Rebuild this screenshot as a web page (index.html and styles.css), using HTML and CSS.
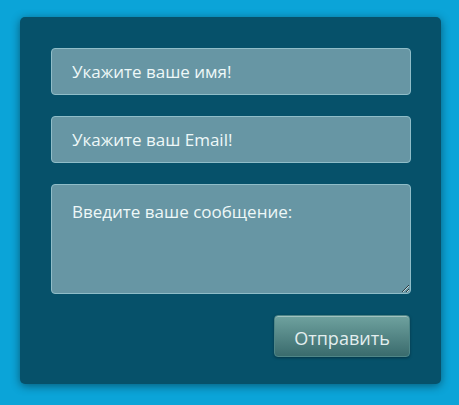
FILE: index.html
```html
<!DOCTYPE html>
<html>
<head>
<meta charset="utf-8">
<link rel="stylesheet" href="styles.css">
</head>
<body>
<div class="card">
  <form class="form">
    <input class="field" type="text" placeholder="Укажите ваше имя!">
    <input class="field" type="text" placeholder="Укажите ваш Email!">
    <textarea class="field area" placeholder="Введите ваше сообщение:"></textarea>
    <div class="actions"><button class="send" type="button">Отправить</button></div>
  </form>
</div>
</body>
</html>
```
FILE: styles.css
```css
html, body { margin: 0; padding: 0; }
body {
  width: 459px; height: 405px;
  background: #0ba4d8;
  font-family: "Open Sans", "Noto Sans", sans-serif;
  box-sizing: border-box;
  padding: 17px 18px 0 20px;
}
.card {
  width: 421px; height: 367px;
  box-sizing: border-box;
  background: #06516a;
  border-radius: 5px;
  box-shadow: 0 2px 10px rgba(0,0,0,0.45);
  padding: 31px 30px 0 31px;
}
.form { display: flex; flex-direction: column; gap: 21px; }
.field {
  display: block;
  width: 360px; height: 47px;
  box-sizing: border-box;
  margin: 0;
  background: #6796a4;
  border: 1px solid #8fbdc8;
  border-radius: 4px;
  padding: 0 20px;
  font-family: inherit;
  font-size: 17px;
  color: #eef8f8;
  outline: none;
}
.field::placeholder { color: #eef8f8; opacity: 1; }
.area { height: 110px; padding-top: 16px; resize: vertical; line-height: 22px; }
.actions { display: flex; justify-content: flex-end; }
.send {
  width: 136px; height: 42px;
  margin-right: 1px;
  border: 1px solid #4f8687;
  border-radius: 4px;
  background: linear-gradient(#6fa29f, #3a6b6d);
  box-shadow: inset 0 1px 0 rgba(255,255,255,0.35), 0 1px 3px rgba(0,0,0,0.35);
  color: #e3eeee;
  font-family: inherit;
  font-size: 18px;
  padding: 3px 0 0;
}
```
